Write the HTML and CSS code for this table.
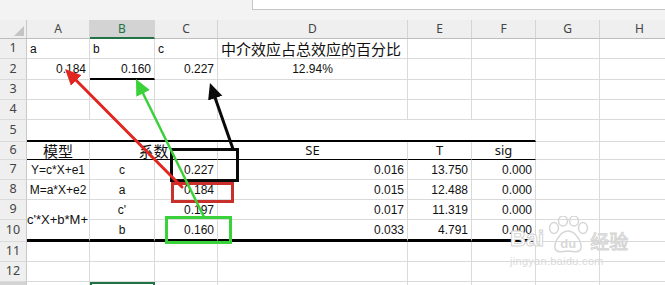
FILE: index.html
```html
<!DOCTYPE html>
<html lang="zh">
<head>
<meta charset="utf-8">
<title>Sheet</title>
<link rel="stylesheet" href="styles.css">
</head>
<body>
<div class="app">
  <div class="topbar"><div class="fx"></div></div>
  <div class="sheet">
    <div class="corner"><span class="tri"></span></div>
    <div class="ch">A</div><div class="ch sel">B</div><div class="ch">C</div><div class="ch">D</div><div class="ch">E</div><div class="ch">F</div><div class="ch">G</div><div class="ch">H</div>

    <div class="rh">1</div>
    <div class="cell">a</div><div class="cell">b</div><div class="cell">c</div><div class="cell cjk">中介效应占总效应的百分比</div><div class="cell"></div><div class="cell"></div><div class="cell"></div><div class="cell"></div>

    <div class="rh">2</div>
    <div class="cell right">0.184</div><div class="cell right b2">0.160</div><div class="cell right">0.227</div><div class="cell center">12.94%</div><div class="cell"></div><div class="cell"></div><div class="cell"></div><div class="cell"></div>

    <div class="rh">3</div>
    <div class="cell"></div><div class="cell"></div><div class="cell"></div><div class="cell"></div><div class="cell"></div><div class="cell"></div><div class="cell"></div><div class="cell"></div>

    <div class="rh">4</div>
    <div class="cell"></div><div class="cell"></div><div class="cell"></div><div class="cell"></div><div class="cell"></div><div class="cell"></div><div class="cell"></div><div class="cell"></div>

    <div class="rh">5</div>
    <div class="cell span6 b2"></div><div class="cell"></div><div class="cell"></div>

    <div class="rh">6</div>
    <div class="cell center cjk b1">模型</div><div class="cell center cjk span2 b1">系数</div><div class="cell center hd b1">SE</div><div class="cell center hd b1">T</div><div class="cell center hd b1">sig</div><div class="cell"></div><div class="cell"></div>

    <div class="rh">7</div>
    <div class="cell center">Y=c*X+e1</div><div class="cell center">c</div><div class="cell right">0.227</div><div class="cell right">0.016</div><div class="cell right">13.750</div><div class="cell right">0.000</div><div class="cell"></div><div class="cell"></div>

    <div class="rh">8</div>
    <div class="cell center">M=a*X+e2</div><div class="cell center">a</div><div class="cell right">0.184</div><div class="cell right">0.015</div><div class="cell right">12.488</div><div class="cell right">0.000</div><div class="cell"></div><div class="cell"></div>

    <div class="rh">9</div>
    <div class="cell rspan2 b3 clip">c'*X+b*M+</div><div class="cell center">c'</div><div class="cell right">0.197</div><div class="cell right">0.017</div><div class="cell right">11.319</div><div class="cell right">0.000</div><div class="cell"></div><div class="cell"></div>

    <div class="rh">10</div>
    <div class="cell center b3">b</div><div class="cell right b3">0.160</div><div class="cell right b3">0.033</div><div class="cell right b3">4.791</div><div class="cell right b3">0.000</div><div class="cell"></div><div class="cell"></div>

    <div class="rh">11</div>
    <div class="cell"></div><div class="cell"></div><div class="cell"></div><div class="cell"></div><div class="cell"></div><div class="cell"></div><div class="cell"></div><div class="cell"></div>

    <div class="rh">12</div>
    <div class="cell"></div><div class="cell"></div><div class="cell"></div><div class="cell"></div><div class="cell"></div><div class="cell"></div><div class="cell"></div><div class="cell"></div>

    <div class="rh rh-sel"></div>
    <div class="cell"></div><div class="cell active"></div><div class="cell"></div><div class="cell"></div><div class="cell"></div><div class="cell"></div><div class="cell"></div><div class="cell"></div>
  </div>

  <svg class="overlay" width="665" height="285" viewBox="0 0 665 285">
    <defs>
      <marker id="ah-red" markerUnits="userSpaceOnUse" markerWidth="18" markerHeight="18" viewBox="0 -9 18 18" refX="1" refY="0" orient="auto">
        <path d="M0,-7.5 L16,0 L0,7.5 z" fill="#e0261f"/>
      </marker>
      <marker id="ah-green" markerUnits="userSpaceOnUse" markerWidth="18" markerHeight="18" viewBox="0 -9 18 18" refX="1" refY="0" orient="auto">
        <path d="M0,-7.5 L16,0 L0,7.5 z" fill="#3ad13a"/>
      </marker>
      <marker id="ah-black" markerUnits="userSpaceOnUse" markerWidth="18" markerHeight="18" viewBox="0 -9 18 18" refX="1" refY="0" orient="auto">
        <path d="M0,-7.5 L16,0 L0,7.5 z" fill="#0a0a0a"/>
      </marker>
    </defs>
    <rect x="171.5" y="149.5" width="66" height="31" fill="none" stroke="#0a0a0a" stroke-width="3"/>
    <rect x="172.5" y="183.5" width="60" height="18" fill="none" stroke="#c9302c" stroke-width="3"/>
    <rect x="166.5" y="217.5" width="64" height="25" fill="none" stroke="#3ad13a" stroke-width="3"/>
    <line x1="182" y1="187" x2="75.6" y2="79.7" stroke="#e0261f" stroke-width="3" stroke-linecap="round" marker-end="url(#ah-red)"/>
    <line x1="204" y1="217" x2="142.6" y2="92.5" stroke="#3ad13a" stroke-width="2.5" marker-end="url(#ah-green)"/>
    <line x1="233" y1="149" x2="214.9" y2="97.2" stroke="#0a0a0a" stroke-width="3" marker-end="url(#ah-black)"/>
  </svg>

  <div class="wm">
    <div class="wm-row">
      <span class="wm-bai">Bai</span>
      <span class="wm-paw">
        <svg width="44" height="38" viewBox="0 0 44 38">
          <ellipse cx="8" cy="12" rx="4.5" ry="5.5" fill="none" stroke="#d6d6d6" stroke-width="1.5"/>
          <ellipse cx="17" cy="5" rx="4.5" ry="5" fill="none" stroke="#d6d6d6" stroke-width="1.5"/>
          <ellipse cx="28" cy="5" rx="4.5" ry="5" fill="none" stroke="#d6d6d6" stroke-width="1.5"/>
          <ellipse cx="37" cy="12" rx="4.5" ry="5.5" fill="none" stroke="#d6d6d6" stroke-width="1.5"/>
          <path d="M22,15 C14,15 8,27 9,32 C10,37 16,36 22,35 C28,36 34,37 35,32 C36,27 30,15 22,15 z" fill="none" stroke="#d6d6d6" stroke-width="1.5"/>
        </svg>
        <span class="wm-du">du</span>
      </span>
      <span class="wm-jy">经验</span>
    </div>
    <div class="wm-url">jingyan.baidu.com</div>
  </div>
</div>
</body>
</html>
```

FILE: styles.css
```css
* { box-sizing: border-box; }
html, body { margin: 0; padding: 0; }
body {
  width: 665px;
  height: 285px;
  overflow: hidden;
  background: #ffffff;
  font-family: "Liberation Sans", Arial, sans-serif;
}
.app {
  position: relative;
  width: 665px;
  height: 285px;
  overflow: hidden;
}
.topbar {
  height: 20px;
  background: #f3f3f3;
  display: flex;
  justify-content: flex-end;
}
.fx {
  width: 413px;
  height: 10px;
  background: #ffffff;
  border-left: 1px solid #c6c6c6;
  border-bottom: 1px solid #c6c6c6;
}
.sheet {
  display: grid;
  grid-template-columns: 27px 63px 65px 63px 190px 64px 64px 64px 80px;
  grid-template-rows: 19px 20px 21px 20px 20px 22px 18px 20px 20px 20px 22px 20px 20px 20px;
}
.corner {
  background: #efefef;
  border-right: 1px solid #c8c8c8;
  border-bottom: 1px solid #bdbdbd;
  display: flex;
  justify-content: flex-end;
  align-items: flex-end;
  padding: 0 2px 2px 0;
}
.tri {
  width: 0;
  height: 0;
  border-left: 10px solid transparent;
  border-bottom: 10px solid #c4c4c4;
}
.ch {
  background: #efefef;
  border-right: 1px solid #d4d4d4;
  border-bottom: 1px solid #bdbdbd;
  display: flex;
  align-items: center;
  justify-content: center;
  font-family: "Noto Sans", "Open Sans", sans-serif;
  font-size: 12px;
  line-height: 1;
  color: #444444;
}
.ch.sel {
  background: #d3d3d3;
  color: #217346;
  border-bottom: 2px solid #217346;
}
.rh {
  background: #efefef;
  border-right: 1px solid #c8c8c8;
  border-bottom: 1px solid #dadada;
  display: flex;
  align-items: center;
  justify-content: center;
  font-family: "Noto Sans", "Open Sans", sans-serif;
  font-size: 12.5px;
  line-height: 1;
  color: #444444;
}
.rh-sel { background: #d3d3d3; }
.cell {
  border-right: 1px solid #dadada;
  border-bottom: 1px solid #dadada;
  display: flex;
  align-items: center;
  padding: 0 3px;
  font-size: 12px;
  line-height: 1;
  white-space: nowrap;
  overflow: hidden;
  color: #111111;
}
.right { justify-content: flex-end; }
.center { justify-content: center; }
.clip {
  padding: 0;
  font-size: 13px;
}
.cjk {
  font-family: "Noto Sans CJK SC", "Liberation Sans", sans-serif;
  font-size: 15px;
  overflow: visible;
}
.hd {
  font-family: "Noto Sans", "Liberation Sans", sans-serif;
  font-size: 13px;
}
.span2 { grid-column: span 2; }
.span6 { grid-column: span 6; }
.rspan2 { grid-row: span 2; }
.b1 { border-bottom: 1px solid #000000; }
.b2 { border-bottom: 2px solid #000000; }
.b3 { border-bottom: 3px solid #000000; }
.active { border: 2px solid #217346; }

.overlay {
  position: absolute;
  left: 0;
  top: 0;
  pointer-events: none;
}

.wm {
  position: absolute;
  left: 510px;
  top: 212px;
  color: #dcdcdc;
  pointer-events: none;
}
.wm-row {
  display: flex;
  align-items: flex-end;
  height: 38px;
}
.wm-bai {
  font-family: "Liberation Sans", sans-serif;
  font-weight: bold;
  font-size: 22px;
  line-height: 1;
  color: #ffffff;
  -webkit-text-stroke: 1px #d4d4d4;
}
.wm-paw {
  display: flex;
  flex-direction: column;
  align-items: center;
  width: 44px;
  margin-left: 2px;
}
.wm-paw svg { display: block; }
.wm-du {
  margin-top: -17px;
  font-family: "Liberation Sans", sans-serif;
  font-weight: bold;
  font-size: 13px;
  line-height: 1;
  color: #d8d8d8;
}
.wm-jy {
  font-family: "Noto Sans CJK SC", sans-serif;
  font-size: 19px;
  line-height: 1;
  color: #ffffff;
  -webkit-text-stroke: 1px #d4d4d4;
}
.wm-url {
  margin-top: 6px;
  font-family: "Liberation Sans", sans-serif;
  font-size: 11px;
  line-height: 1;
  letter-spacing: 0.3px;
  color: #dadada;
}
```
